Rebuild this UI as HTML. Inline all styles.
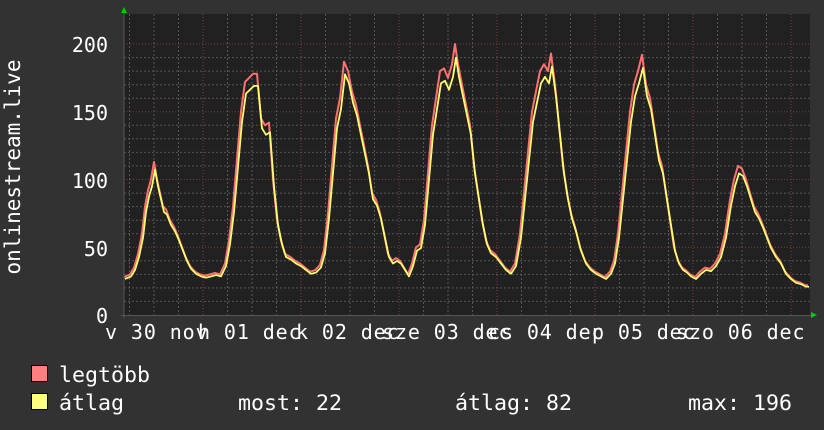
<!DOCTYPE html>
<html><head><meta charset="utf-8"><style>
html,body{margin:0;padding:0;background:#323232;}
svg{display:block}
text{font-family:"DejaVu Sans Mono","Liberation Mono",monospace;fill:#fff;font-size:20px}
.lg text{font-size:21.6px}
.xl text{font-size:20px;letter-spacing:0.9px}
</style></head><body>
<svg width="824" height="430" viewBox="0 0 824 430" xmlns="http://www.w3.org/2000/svg">
<rect width="824" height="430" fill="#323232"/>
<rect x="124" y="14" width="686" height="301" fill="#212121"/>
<g id="grid"></g>
<polyline id="mx" fill="none" stroke="#ff7070" stroke-width="2" stroke-linejoin="round"/>
<polyline id="av" fill="none" stroke="#ffff70" stroke-width="1.8" stroke-linejoin="round" transform="translate(1,15.75) scale(1,0.95)"/>
<line x1="124" y1="12" x2="124" y2="318" stroke="#555" stroke-width="1"/>
<line x1="121" y1="315.5" x2="812" y2="315.5" stroke="#555" stroke-width="1"/>
<polygon points="121,13 127,13 124,7" fill="#00cc00"/>
<polygon points="811,312 811,318 817,315" fill="#00cc00"/>
<g text-anchor="end">
<text x="108" y="52">200</text>
<text x="108" y="120">150</text>
<text x="108" y="188">100</text>
<text x="108" y="256">50</text>
<text x="108" y="323">0</text>
</g>
<text transform="translate(20,167) rotate(-90)" text-anchor="middle" style="font-size:21px">onlinestream.live</text>
<g class="xl">
<text x="105" y="339">v 30 nov</text>
<text x="198" y="339">h 01 dec</text>
<text x="296" y="339">k 02 dec</text>
<text x="382" y="339">sze 03 dec</text>
<text x="488" y="339">cs 04 dec</text>
<text x="592" y="339">p 05 dec</text>
<text x="676" y="339">szo 06 dec</text>
</g>
<rect x="31.5" y="365.5" width="16" height="16" fill="#ff7f7f" stroke="#000"/>
<rect x="31.5" y="393.5" width="16" height="16" fill="#ffff7f" stroke="#000"/>
<g class="lg">
<text x="59" y="382">legtöbb</text>
<text x="59" y="410">átlag</text>
<text x="238" y="410">most: 22</text>
<text x="455" y="410">átlag: 82</text>
<text x="688" y="410">max: 196</text>
</g>
</svg>
<script>
var g=document.getElementById('grid'),h='';
for(var v=10;v<=200;v+=10){var y=(315-v*1.355).toFixed(1);var maj=v%50==0;
h+='<line x1="124" x2="810" y1="'+y+'" y2="'+y+'" stroke="'+(maj?'#7a3a3a':'#555')+'" stroke-dasharray="'+(maj?'1,2':'2,2')+'"/>';}
for(var i=0;i<28;i++){var x=129.5+24.5*i;if(x>809)break;var maj=(i%4==3);
h+='<line y1="14" y2="315" x1="'+x+'" x2="'+x+'" stroke="'+(maj?'#7a3a3a':'#555')+'" stroke-dasharray="'+(maj?'1,2':'2,2')+'"/>';}
g.innerHTML=h;
var d=[124,28,130,30,134,35,138,45,142,60,145,80,148,92,151,100,154,113,157,100,160,90,163,80,166,78,170,70,174,65,178,58,182,50,186,42,190,36,195,32,200,30,205,29,210,30,215,31,220,30,225,38,229,55,233,80,237,115,241,150,245,172,249,175,253,178,257,178,261,145,265,140,269,142,273,100,277,70,281,55,285,45,290,43,295,40,300,38,305,35,310,32,315,33,320,37,324,48,328,75,332,110,336,145,340,160,344,187,348,180,352,165,356,155,360,140,364,125,368,110,372,90,376,85,380,75,384,60,388,45,392,40,396,42,400,40,404,35,408,30,412,38,416,50,420,52,424,70,428,105,432,140,436,160,440,180,444,182,448,175,452,185,455,200,458,185,462,170,466,155,470,140,474,110,478,90,482,70,486,55,490,48,495,45,500,40,505,35,510,32,515,38,520,60,524,90,528,120,532,150,536,165,540,180,544,185,548,180,551,193,555,170,559,140,563,110,567,90,571,75,575,65,580,50,585,40,590,35,595,32,600,30,605,28,610,32,614,40,618,60,622,90,626,120,630,150,634,170,638,180,642,192,646,170,650,160,654,140,658,120,662,110,666,90,670,70,674,50,678,40,682,35,686,33,690,30,695,28,700,32,705,35,710,34,715,38,720,45,725,60,730,85,734,100,738,110,742,108,746,100,750,90,754,80,758,75,762,68,766,60,770,52,775,45,780,40,785,32,790,28,795,25,800,24,805,22,808,22];
var p=[];for(var i=0;i<d.length;i+=2){p.push(d[i]+','+(315-d[i+1]*1.355).toFixed(1));}
document.getElementById('mx').setAttribute('points',p.join(' '));
document.getElementById('av').setAttribute('points',p.join(' '));
</script>
</body></html>
